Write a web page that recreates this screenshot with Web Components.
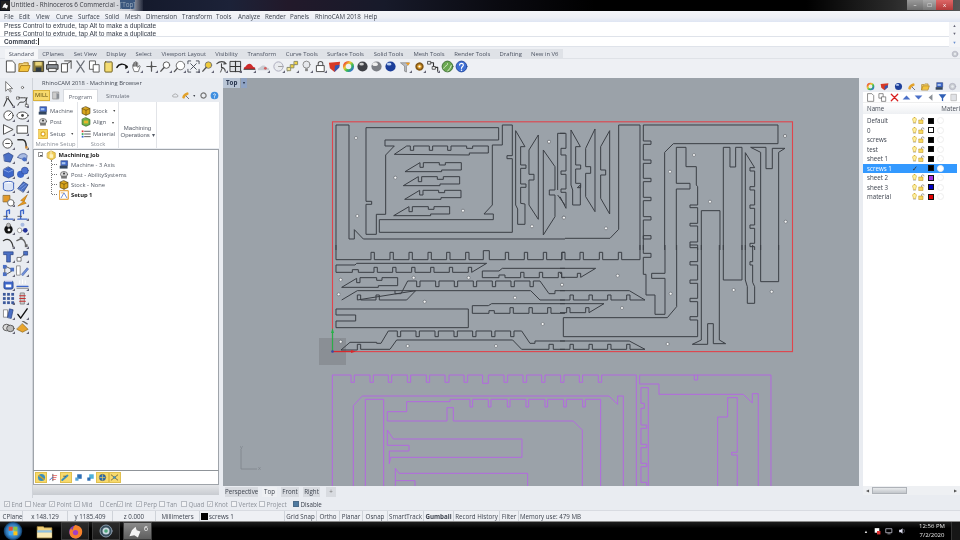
<!DOCTYPE html>
<html><head><meta charset="utf-8"><title>Rhino</title>
<style>
html,body{margin:0;padding:0;width:960px;height:540px;overflow:hidden;background:#e9ecf1}
body{font-family:"Open Sans","Noto Sans",sans-serif;font-size:6.2px;color:#3a3f48}
rh-app{filter:blur(.42px)}
</style></head><body>
<rh-app></rh-app>
<script>
const S='stroke-linejoin="round" stroke-linecap="round"';
const ICONS={
new:`<path d="M3 1h6l3 3v9H3z" fill="#fff" stroke="#444"/>`,
open:`<path d="M1 12V4h4l1-1h5v2" fill="#f5d67a" stroke="#a97c1c"/><path d="M1 12l2-6h10l-2 6z" fill="#f2c33c" stroke="#a97c1c"/>`,
save:`<rect x="1.5" y="1.5" width="11" height="11" fill="#8d7c3a" stroke="#3b3a30"/><rect x="3.5" y="2" width="7" height="4" fill="#e9d47c"/><rect x="4" y="8" width="6" height="4.5" fill="#2f3a44"/>`,
print:`<rect x="3" y="1.5" width="8" height="4" fill="#fff" stroke="#444"/><rect x="1" y="5" width="12" height="5" fill="#8a8f96" stroke="#333"/><rect x="3" y="9" width="8" height="3.5" fill="#eee" stroke="#444"/>`,
doc2:`<path d="M2 4h6v9H2z" fill="#fff" stroke="#444"/><path d="M5 1h7v8" fill="none" stroke="#444"/><path d="M8 4l4-3" stroke="#444"/>`,
cut:`<path d="M3 1l8 12M11 1L3 13" stroke="#6c7078" stroke-width="1.3"/>`,
copy:`<path d="M2 1h6v9H2z" fill="#fff" stroke="#555"/><path d="M6 5h6v8H6z" fill="#fff" stroke="#555"/>`,
paste:`<rect x="3" y="2" width="8" height="11" rx="1" fill="#f4dc72" stroke="#6a5a18"/><rect x="5" y="1" width="4" height="2" fill="#999"/>`,
undo:`<path d="M1 8c2-4 7-5 11-1" fill="none" stroke="#111" stroke-width="1.6"/><path d="M10 5l3 3-3 2z" fill="#111"/>`,
hand:`<path d="M3 8V5l1 0v2V3l1.400 0v4V2l1.500 0v5V3l1.400 0v5l1.700-2 1 .5-2 6H5z" fill="#fff" stroke="#555" stroke-width=".8"/>`,
move:`<path d="M7 2v10M2 7h10" stroke="#555" stroke-width="1.300"/><circle cx="7" cy="7" r="1.300" fill="#555"/>`,
mag:`<circle cx="8" cy="5.500" r="3.500" fill="#fff" stroke="#555"/><path d="M5.500 8L2 12" stroke="#555" stroke-width="1.500"/>`,
magd:`<circle cx="8" cy="6" r="4.500" fill="#fff" stroke="#555" stroke-dasharray="1.500 1"/><path d="M4.500 9L1.500 12.500" stroke="#555" stroke-width="1.500"/>`,
ext:`<path d="M1 4V1h3M10 1h3v3M13 10v3h-3M4 13H1v-3M4 4l6 6M10 4l-6 6" fill="none" stroke="#454b55"/>`,
magy:`<circle cx="8" cy="5.500" r="3.500" fill="#f0cb3a" stroke="#777"/><path d="M5.500 8L2 12" stroke="#555" stroke-width="1.500"/>`,
rot:`<path d="M2 4c3-3 8-3 10 0M12 4l-2.500.2M11 12c0-3-3-4-4-4V4" fill="none" stroke="#444" stroke-width="1.200"/><path d="M6 13l2-5" stroke="#444"/>`,
grid:`<rect x="1.500" y="1.500" width="11" height="11" fill="#dfe2e6" stroke="#333"/><path d="M7 1.500v11M1.500 7h11" stroke="#333" stroke-width="1.200"/>`,
car:`<path d="M1 8c2 0 3-4 6-4s3 4 6 4v2H1z" fill="#cf2a2a"/><path d="M1 10h12" stroke="#333"/>`,
carg:`<path d="M1 9c2 0 3-3 6-3s3 3 6 3v2H1z" fill="#c9ccd2"/><circle cx="9" cy="9" r="1.500" fill="#d06060"/>`,
clk:`<circle cx="7" cy="7" r="5" fill="#e9ebef" stroke="#aab"/><path d="M7 7h4" stroke="#999"/>`,
pts:`<path d="M2 12L7 7l5-4" stroke="#aaa" fill="none"/><rect x="9" y="1.500" width="3.500" height="3.500" fill="#f0d040" stroke="#886"/><rect x="5" y="5" width="3.500" height="3.500" fill="#f0d040" stroke="#886"/><rect x="1.500" y="8" width="3.500" height="3.500" fill="#f6e898" stroke="#886"/>`,
bulb:`<circle cx="7" cy="5" r="3.800" fill="#e6e8ec" stroke="#888"/><rect x="5.500" y="9" width="3" height="3" fill="#888"/>`,
lock:`<path d="M4.500 6V4a2.500 2.500 0 0 1 5 0v2" fill="none" stroke="#555" stroke-width="1.100"/><rect x="3" y="6" width="8" height="6.500" fill="#fff" stroke="#444"/>`,
shield:`<path d="M1 3l12-1-1 6-5 5-5-4z" fill="#d73a26"/><path d="M7 13l5-5 .5-3-5 1z" fill="#3257b5"/>`,
wheel:`<circle cx="7" cy="7" r="4.500" fill="none" stroke="url(#cw)" stroke-width="3"/><defs><linearGradient id="cw" x2="1" y2="1"><stop stop-color="#e33"/><stop offset=".35" stop-color="#ec3"/><stop offset=".65" stop-color="#3b5"/><stop offset="1" stop-color="#36d"/></linearGradient></defs>`,
sph1:`<circle cx="7" cy="7" r="5.500" fill="#3d3f44"/><ellipse cx="6" cy="4.500" rx="2.500" ry="1.500" fill="#ccc"/>`,
sph2:`<circle cx="7" cy="7" r="5.500" fill="#7b7e84"/><ellipse cx="5.500" cy="4.500" rx="3" ry="2" fill="#eee"/>`,
sph3:`<circle cx="7" cy="7" r="5.500" fill="#1d3f9a"/><ellipse cx="5.500" cy="4.500" rx="2.500" ry="1.500" fill="#b8d0f5"/>`,
fun:`<path d="M2 3h9L8 7v6L6 12V7z" fill="#b8bcc2" stroke="#777" stroke-width=".7"/><path d="M7 3h5l-2 3z" fill="#ee9a20"/>`,
gear:`<circle cx="7" cy="7" r="3.500" fill="#e3a22a" stroke="#84591a" stroke-width="2" stroke-dasharray="1.800 .9"/><circle cx="7" cy="7" r="1.200" fill="#fff"/>`,
node:`<path d="M2.500 3H7v5h4.500v4" fill="none" stroke="#333" stroke-width="1.200"/><rect x="1" y="1.500" width="3" height="3" fill="#eee" stroke="#333" stroke-width=".8"/><rect x="6" y="7" width="3" height="3" fill="#eee" stroke="#333" stroke-width=".8"/>`,
globe:`<circle cx="7" cy="7" r="5.800" fill="#69a84f" stroke="#3e6d35"/><path d="M3 9c2-4 4-2 4-5M7 12c2-2 3-3 4-6" stroke="#e8f0dc" fill="none"/>`,
help:`<circle cx="7" cy="7" r="5.800" fill="#3f6fd4" stroke="#254a9c"/><path d="M5 5.500C5 3 9 3 9 5.500 9 7 7 7 7 9" fill="none" stroke="#fff" stroke-width="1.300"/><circle cx="7" cy="11" r=".8" fill="#fff"/>`,
arrow:`<path d="M4 1v10l2.500-2.500L9 12l1-.8-2-3h3z" fill="#fff" stroke="#555" stroke-width=".8"/>`,
dot:`<circle cx="7" cy="7" r="1.200" fill="#fff" stroke="#555" stroke-width=".8"/>`,
pline:`<path d="M2 12L6 3l6 9" fill="none" stroke="#333" stroke-width="1.100"/><rect x="5" y="1.800" width="2" height="2" fill="#fff" stroke="#333" stroke-width=".6"/>`,
crv:`<path d="M2 11c3-8 6 2 10-8" fill="none" stroke="#333"/><rect x="1" y="2" width="2.500" height="2.500" fill="#fff" stroke="#333" stroke-width=".6"/><rect x="10.500" y="10" width="2.500" height="2.500" fill="#fff" stroke="#333" stroke-width=".6"/><path d="M3 3h8v8" stroke="#333" fill="none" stroke-dasharray="1 1"/>`,
circ:`<circle cx="7" cy="7" r="5" fill="#fff" stroke="#444"/><path d="M7 7l3-3" stroke="#444"/>`,
ell:`<ellipse cx="7" cy="7" rx="6" ry="3.800" fill="#fff" stroke="#444"/><circle cx="7" cy="7" r="1.500" fill="#444"/>`,
tri:`<path d="M2 2l10 5-10 5z" fill="#fff" stroke="#444"/>`,
rect:`<rect x="1.500" y="3" width="11" height="8" fill="#fff" stroke="#444"/>`,
circx:`<circle cx="6" cy="7" r="5" fill="#fff" stroke="#444"/><path d="M4 7h4" stroke="#444"/>`,
arc:`<path d="M2 3h5c3 0 4 3 4 8" fill="none" stroke="#333" stroke-width="1.500"/><rect x="10" y="10" width="2.500" height="2.500" fill="#d58a2c"/>`,
srf:`<path d="M2 4l5-2 5 3-3 7-6-1z" fill="#4a6fc4" stroke="#223a7a" stroke-width=".7"/>`,
srf2:`<path d="M2 7c0-4 8-6 10-2l-1 6c-3-3-6-2-9-4z" fill="#a9bbe2" stroke="#3a4f8a" stroke-width=".7"/><circle cx="9" cy="9" r="2.300" fill="#4a6fc4"/>`,
cube:`<path d="M7 1l5.500 3v6.500L7 13l-5.500-2.500V4z" fill="#3d66c9" stroke="#223a7a" stroke-width=".7"/><path d="M1.500 4L7 6.500 12.500 4" fill="none" stroke="#a9c0f0" stroke-width=".7"/>`,
spheres:`<circle cx="5" cy="9" r="3.800" fill="#3d66c9"/><circle cx="9.500" cy="5" r="3.800" fill="#4f74d2" stroke="#223a7a" stroke-width=".5"/>`,
cyl:`<ellipse cx="7" cy="3.500" rx="5.500" ry="2" fill="#fff" stroke="#3a5fb8"/><path d="M1.500 3.500v6c0 3 11 3 11 0v-6" fill="#dbe4f5" stroke="#3a5fb8"/>`,
patch:`<path d="M2 9l6-7 5 3-5 8z" fill="#4a6fc4" stroke="#223a7a" stroke-width=".7"/><path d="M4 8l5-4M6 10l5-4" stroke="#a9c0f0" stroke-width=".6"/>`,
bool:`<rect x="1.500" y="1.500" width="7" height="7" fill="#e39a2a" stroke="#7a5515" stroke-width=".7"/><circle cx="9.500" cy="9.500" r="3.500" fill="#fff" stroke="#666"/>`,
oarr:`<path d="M12 1L5 7l3 1-6 5 9-3-2-2z" fill="#e89a1c" stroke="#a7680f" stroke-width=".6"/>`,
ltool:`<path d="M2 12h10M5 12V3l3-1v4" fill="none" stroke="#3d66c9" stroke-width="1.500"/><path d="M2 9h4" stroke="#555"/>`,
blob:`<circle cx="7" cy="8" r="4.500" fill="#111"/><circle cx="7" cy="3.500" r="2.200" fill="#bbb" stroke="#555" stroke-width=".6"/><circle cx="7.500" cy="8.500" r="1.500" fill="#eee"/>`,
blob2:`<circle cx="4" cy="9" r="2.500" fill="#fff" stroke="#777" stroke-width=".7"/><circle cx="7" cy="3" r="2.200" fill="#a9bbe2"/><circle cx="10" cy="9" r="2.500" fill="#23329a"/>`,
c1:`<path d="M1.500 5c5-3 9-1 10.500 7" fill="none" stroke="#333" stroke-width="1.300"/>`,
c2:`<path d="M1 5l4-2c3 0 5 3 6 8" fill="none" stroke="#666" stroke-width="1.500"/><rect x="9.500" y="9" width="3" height="3" fill="#666"/><rect x="4" y="1" width="3" height="2" fill="#666"/>`,
tee:`<path d="M2 2h10v3H9v8H5V5H2z" fill="#4a6fc4" stroke="#223a7a" stroke-width=".7"/>`,
scale:`<rect x="1.500" y="8" width="4" height="4" fill="#fff" stroke="#555" stroke-width=".8"/><rect x="8.500" y="1.500" width="4" height="4" fill="#4a6fc4" stroke="#223a7a" stroke-width=".7"/><path d="M5 8l4-3" stroke="#555" stroke-dasharray="1 1"/>`,
nodes:`<rect x="1" y="1" width="4" height="4" fill="#4a6fc4"/><rect x="9" y="4" width="4" height="4" fill="#4a6fc4"/><rect x="1" y="9" width="4" height="4" fill="#4a6fc4"/><path d="M5 3l4 2M3 5v4M5 11l5-3" stroke="#333" stroke-width=".8"/>`,
pen:`<rect x="1" y="2" width="3.500" height="10" fill="#fff" stroke="#666" stroke-width=".7"/><path d="M6 11l6-7 1.500 1.500L7.500 12.500z" fill="#6d8fdc" stroke="#34509a" stroke-width=".6"/>`,
bbox:`<rect x="2" y="3" width="10" height="9" rx="2" fill="#3d66c9" stroke="#223a7a" stroke-width=".7"/><rect x="4" y="7" width="6" height="3" fill="#fff"/><rect x="3" y="2" width="8" height="2" fill="#dde"/>`,
dim:`<path d="M1 9h12" stroke="#3d66c9" stroke-width="1.300"/><path d="M4 6V3M7 6V2M10 6V3" stroke="#fff"/><path d="M1 11h12" stroke="#777"/>`,
arr:`<g fill="#3d5a9c"><rect x="1" y="1" width="3" height="3"/><rect x="5.500" y="1" width="3" height="3"/><rect x="10" y="1" width="3" height="3"/><rect x="1" y="5.500" width="3" height="3"/><rect x="5.500" y="5.500" width="3" height="3"/><rect x="10" y="5.500" width="3" height="3"/><rect x="1" y="10" width="3" height="3"/><rect x="5.500" y="10" width="3" height="3"/><rect x="10" y="10" width="3" height="3"/></g>`,
stripe:`<rect x="5" y="1" width="4" height="12" fill="#ccc" stroke="#666" stroke-width=".7"/><path d="M4 4h6M4 7h6M4 10h6" stroke="#c93030" stroke-width="1.200"/>`,
book:`<path d="M2 3h4v8H2z" fill="#fff" stroke="#666" stroke-width=".7"/><path d="M6 11l2-9 4 1-2 9z" fill="#4a6fc4" stroke="#223a7a" stroke-width=".7"/>`,
chk:`<path d="M2 8l3 4 7-10" fill="none" stroke="#111" stroke-width="1.500"/>`,
ring:`<ellipse cx="5" cy="7" rx="4" ry="3.500" fill="#ddd" stroke="#555"/><ellipse cx="9" cy="8" rx="4" ry="3.500" fill="#bbb" stroke="#555"/>`,
pyr:`<path d="M7 3l6 6-6 3-6-3z" fill="#e8a52e" stroke="#8a6415" stroke-width=".7"/><path d="M7 0l5 3" stroke="#666" stroke-width="1.500"/>`,
machine:`<rect x="3" y="1" width="9" height="7" fill="#3d66c9" stroke="#1b2f66" stroke-width=".7"/><rect x="1" y="8" width="11" height="4" fill="#33465f"/><rect x="4" y="3" width="5" height="3" fill="#a9c6ee"/>`,
post:`<ellipse cx="7" cy="6" rx="5" ry="4" fill="#d8d8d8" stroke="#444" stroke-width=".8"/><rect x="3" y="8" width="8" height="4" fill="#777"/><circle cx="7" cy="5" r="1.500" fill="#444"/>`,
setup:`<rect x=".7" y=".7" width="12.600" height="12.600" fill="#f6d860" stroke="#d99d1a"/><circle cx="7" cy="7" r="2.800" fill="#fff" stroke="#d99d1a" stroke-dasharray="1.200 .7" stroke-width="1.500"/>`,
stock:`<path d="M7 1l5.500 2.500v7L7 13l-5.500-2.500v-7z" fill="#d9a51e" stroke="#4d3a08" stroke-width=".9"/><path d="M1.500 3.500L7 6l5.500-2.500M7 6v7" fill="none" stroke="#4d3a08" stroke-width=".7"/>`,
align:`<path d="M7 1l5.500 2.500v7L7 13l-5.500-2.500v-7z" fill="#6fb04a" stroke="#2a5c1b" stroke-width=".9"/><rect x="4" y="5" width="6" height="4" fill="#e6b72a"/>`,
mat:`<g><rect x="1" y="2" width="2.500" height="2.500" fill="#d33"/><rect x="1" y="5.800" width="2.500" height="2.500" fill="#3a5"/><rect x="1" y="9.500" width="2.500" height="2.500" fill="#36c"/><path d="M5 3.200h8M5 7h8M5 10.700h8" stroke="#333" stroke-width="1.100"/></g>`,
job:`<path d="M2 4l5-3 6 3v7l-5 3-6-3z" fill="#f0cc55" stroke="#b98d1d" stroke-width=".8"/><path d="M7 1v6" stroke="#fff"/><path d="M5 6h5v5H5z" fill="#fff2bb"/>`,
set1:`<rect x="1" y="1" width="12" height="12" fill="#fff" stroke="#e39a2a" stroke-width="1.400"/><path d="M3 11l4-7 4 7" fill="none" stroke="#3d66c9"/><path d="M3 4h3" stroke="#e39a2a"/>`,
cloud:`<path d="M3 10a2 2 0 0 1 0-4c1-3 6-3 7 0a2 2 0 0 1 0 4z" fill="none" stroke="#777"/>`,
mach:`<rect x="1.500" y="1.500" width="9" height="11" fill="#ccc" stroke="#666" stroke-width=".7"/><path d="M7 3l4 2v6l-4 2z" fill="#8a8f96"/>`,
tool:`<path d="M2 11c0-5 4-8 9-9l1 3-5 3-2 4z" fill="#e3a22a"/><path d="M8 8l4 4" stroke="#667" stroke-width="1.400"/>`,
gr:`<circle cx="7" cy="7" r="4" fill="none" stroke="#777" stroke-width="2" stroke-dasharray="1.800 1"/>`,
helps:`<circle cx="7" cy="7" r="6" fill="#3f8fe0"/><path d="M5.500 5.500C5.500 4 8.500 4 8.500 5.500 8.500 7 7 7 7 8.500" fill="none" stroke="#fff" stroke-width="1.200"/><circle cx="7" cy="10.500" r=".8" fill="#fff"/>`,
bt1:`<circle cx="7" cy="7" r="5.500" fill="#3d8fbc"/><path d="M3 4l8 6" stroke="#d9a51e" stroke-width="2"/>`,
bt2:`<path d="M6 2v10" stroke="#111"/><path d="M6 4h6M6 7h5M6 10h4" stroke="#d33"/><path d="M1 11l4-4" stroke="#36c" stroke-width="1.500"/>`,
bt3:`<path d="M2 11l8-7" stroke="#3d8fbc" stroke-width="3"/><path d="M4 5h3" stroke="#333"/>`,
bt4:`<rect x="5" y="2" width="7" height="7" fill="#2e6fb5"/><rect x="2" y="7" width="5" height="5" fill="#59a6d8"/>`,
bt5:`<rect x="5" y="2" width="7" height="7" fill="#4fb2d8"/><rect x="2" y="7" width="5" height="5" fill="#2e6fb5"/>`,
bt6:`<circle cx="7" cy="7" r="5" fill="#2e6fb5" stroke="#444" stroke-width=".6"/><path d="M3 7h8M7 3v8" stroke="#f0cc55"/>`,
bt7:`<path d="M2 3l10 8M2 11l10-8" stroke="#333"/><circle cx="7" cy="7" r="2" fill="#3d8fbc"/>`,
pdoc:`<path d="M3 1h6l3 3v9H3z" fill="#fff" stroke="#555"/>`,
pdup:`<path d="M2 1h6v7H2z" fill="#fff" stroke="#555"/><path d="M6 6h6v7H6z" fill="#fff" stroke="#555"/>`,
pdel:`<path d="M2 2l10 10M12 2L2 12" stroke="#d81e1e" stroke-width="2"/>`,
pup:`<path d="M1 10l6-6 6 6z" fill="#4b70c8"/>`,
pdn:`<path d="M1 4l6 6 6-6z" fill="#4b70c8"/>`,
pl:`<path d="M10 2L4 7l6 5z" fill="#8a8f96"/>`,
pfil:`<path d="M1 2h12L8 8v5l-2-1V8z" fill="#2f5fb5"/>`,
pg:`<rect x="2" y="2" width="8" height="10" fill="#e0e2e6" stroke="#aaa"/>`,
gg:`<circle cx="7" cy="7" r="5" fill="#c8ccd1" stroke="#aab"/><circle cx="7" cy="7" r="2" fill="#e9ecf1"/>`,
bulbY:`<path d="M7 1a4 4 0 0 1 2.500 7v3h-5V8A4 4 0 0 1 7 1z" fill="#fff2a0" stroke="#c99a17"/><path d="M5 12.500h4" stroke="#888"/>`,
lockY:`<path d="M7 6V4a2.500 2.500 0 0 1 5 0" fill="none" stroke="#555"/><rect x="2" y="6" width="8" height="7" fill="#f6d860" stroke="#b98d1d"/>`,
ff:`<circle cx="7" cy="7.500" r="6" fill="#7a3bb8"/><path d="M7 1c5 1 7 4 6 8-1 4-7 6-10 3C1 10 1 6 3 4l1 2c1-2 1-4 3-5z" fill="#f6822a"/><circle cx="7" cy="8" r="2.500" fill="#a33fc4"/>`,
rc:`<circle cx="7" cy="7" r="6" fill="#3a5160" stroke="#89a"/><circle cx="7" cy="7" r="3.500" fill="#c8d8e0"/><circle cx="7" cy="7" r="1.800" fill="#4ca67a"/>`,
fold:`<path d="M1 12V3h5l1 1h6v8z" fill="#f1d27d" stroke="#b89545" stroke-width=".6"/><path d="M1 6h12v2H1z" fill="#8ec1e3"/><path d="M1 8h12v4H1z" fill="#f8e9b5"/>`,
rhino:`<path d="M2 11l2-5 3-3 1 3 3 1-2 5-3-2z" fill="#f5f5f5"/>`,
orb:`<circle cx="7" cy="7" r="6.500" fill="url(#ob)"/><defs><radialGradient id="ob"><stop stop-color="#7cc8ee"/><stop offset=".75" stop-color="#2c75b7"/><stop offset="1" stop-color="#0e3458"/></radialGradient></defs><rect x="4" y="4" width="2.800" height="2.800" fill="#e34d32"/><rect x="7.300" y="4" width="2.800" height="2.800" fill="#8cc63f"/><rect x="4" y="7.200" width="2.800" height="2.800" fill="#3fa9f5"/><rect x="7.300" y="7.200" width="2.800" height="2.800" fill="#fcc419"/>`,
tflag:`<path d="M3 2h8v8H3z" fill="#fff"/><rect x="7" y="7" width="6" height="6" fill="#d33"/>`,
tnet:`<rect x="2" y="3" width="10" height="7" fill="none" stroke="#dde" stroke-width="1.200"/><path d="M5 12h4" stroke="#dde"/>`,
tvol:`<path d="M2 5h3l3-3v10L5 9H2z" fill="#dde"/><path d="M10 4c2 2 2 4 0 6" stroke="#889" fill="none"/>`
};
function svgIcon(n,sz=13,fly){return `<svg width="${sz}" height="${sz}" viewBox="0 0 14 14" style="display:block;flex:none" ${S}>${ICONS[n]||''}${fly?'<path d="M14 11v3h-3z" fill="#667"/>':''}</svg>`}

class Base extends HTMLElement{constructor(){super();this.attachShadow({mode:'open'}).innerHTML=this.render()}render(){return ''}}

customElements.define('rh-icon',class extends Base{render(){const s=+this.getAttribute('size')||13;return `<style>:host{display:block;width:${s}px;height:${s}px;flex:none}</style>`+svgIcon(this.getAttribute('name'),s,this.hasAttribute('fly'))}});

customElements.define('rh-titlebar',class extends Base{render(){return `<style>
:host{display:flex;height:11px;background:linear-gradient(90deg,#10141f 0,#14192b 14%,#1c2238 24%,#22192a 30%,#171a2a 40%,#0a0a10 52%,#000 62%,#000 84%,#2a2a2a 93%,#555 100%);align-items:center;position:relative;overflow:hidden}
.ic{width:9px;height:9px;margin-left:1px;background:#222;display:flex}
.t{font-size:6.300px;color:#3a3c44;padding:0 8px 0 1px;height:11px;line-height:10px;background:linear-gradient(90deg,#dcdde0,#d6d7db 80%,#c4c7d0 90%,rgba(160,170,190,.1));white-space:nowrap}
.t b{font-weight:400;background:#3a567d;color:#9ab}
.btns{margin-left:auto;margin-right:7px;display:flex;height:9.500px;align-self:flex-start}
.btns span{display:flex;align-items:center;justify-content:center;color:#fff;font-size:6px;height:100%}
.m{width:16px;background:linear-gradient(#999,#6c6c6c)}.x{width:13px;background:linear-gradient(#aaa,#777)}.c{width:17px;background:linear-gradient(#d66,#b23a3a)}
</style><div class="ic">${svgIcon('rhino',9)}</div><div class="t">Untitled - Rhinoceros 6 Commercial - <b>[Top]</b></div>
<div class="btns"><span class="m">–</span><span class="x">□</span><span class="c">x</span></div>`}});

customElements.define('rh-menu',class extends Base{render(){const it=[['File',4],['Edit',19],['View',36],['Curve',56],['Surface',78],['Solid',105],['Mesh',125],['Dimension',146],['Transform',182],['Tools',216],['Analyze',238],['Render',265],['Panels',290],['RhinoCAM 2018',315],['Help',364]];let h='';it.forEach((a,i)=>{const w=(it[i+1]?it[i+1][1]:a[1]+30)-a[1];h+=`<span style="width:${w}px">${a[0]}</span>`});
return `<style>:host{display:flex;height:11px;padding-left:4px;box-sizing:border-box;background:linear-gradient(#f4f5f8,#eef0f5 60%,#dfe5f3);align-items:center;font-size:6.200px;color:#3a404c;white-space:nowrap}span{display:block;flex:none}</style>${h}`}});

customElements.define('rh-command',class extends Base{render(){return `<style>
:host{display:flex;flex-direction:column;height:25px;background:#fff;font-size:6.200px;color:#3a404c;position:relative}
.h{height:15px;padding:0 4px;box-sizing:border-box;border-bottom:1px solid #dfe3ea;font-family:"Liberation Sans",sans-serif;font-size:6.600px;line-height:7.900px}
.c{height:10px;padding-left:4px;line-height:9px;border-bottom:1px solid #dfe3ea;box-sizing:border-box;font-family:"Liberation Sans",sans-serif;font-size:6.400px}
b{font-weight:700}i{display:inline-block;width:.6px;height:7px;background:#333;vertical-align:-1px;margin-left:1px}
.sb{position:absolute;right:0;top:0;bottom:0;width:11px;background:#f3f4f7;display:flex;flex-direction:column;align-items:center;color:#667;font-size:4px;line-height:8px;justify-content:space-around}
</style><div class="h">Press Control to extrude, tap Alt to make a duplicate<br>Press Control to extrude, tap Alt to make a duplicate</div><div class="c"><b>Command:</b><i></i></div>
<div class="sb"><span>▲</span><span>▼</span><span style="color:#6a8fce">▼</span></div>`}});

customElements.define('rh-tabs',class extends Base{render(){const t=[['Standard',32.5,1],['CPlanes',31],['Set View',33.5],['Display',28.5],['Select',26.5],['Viewport Layout',53.5],['Visibility',32],['Transform',38.5],['Curve Tools',41.5],['Surface Tools',46],['Solid Tools',40],['Mesh Tools',41],['Render Tools',45.5],['Drafting',31.5],['New in V6',36.5]];
return `<style>:host{display:flex;height:12px;padding:2px 0 0 5px;box-sizing:border-box;font-size:5.900px;color:#4a5160;white-space:nowrap;background:#eef0f4;border-bottom:1px solid #dfe2e7;position:relative}
span{display:flex;align-items:center;justify-content:center;flex:none;background:#dfe2e7;box-sizing:border-box;height:10px}span.a{background:#f5f6f8}
.g{position:absolute;right:1px;top:3px}</style>${t.map(a=>`<span class="${a[2]?'a':''}" style="width:${a[1]}px">${a[0]}</span>`).join('')}<div class="g">${svgIcon('gg',8)}</div>`}});

customElements.define('rh-toolbar',class extends Base{render(){const n=['new','open','save','print','doc2','cut','copy','paste','undo','hand','move','mag','magd','ext','magy','rot','grid','car','carg','clk','pts','bulb','lock','shield','wheel','sph1','sph2','sph3','fun','gear','node','globe','help'];const fly=new Set(['undo','hand','move','mag','magd','ext','magy','rot','grid','car','carg','clk','pts','bulb','lock','fun','gear','node']);
return `<style>:host{display:flex;height:19px;padding:0 0 5px 3.500px;box-sizing:border-box;align-items:center;background:#eef0f4}rh-icon{margin-right:1.120px}</style>${n.map(i=>`<rh-icon name="${i}" ${fly.has(i)?'fly':''}></rh-icon>`).join('')}`}});

customElements.define('rh-left',class extends Base{render(){const n=['arrow','dot','pline','crv','circ','ell','tri','rect','circx','arc','srf','srf2','cube','spheres','cyl','patch','bool','oarr','ltool','ltool','blob','blob2','c1','c2','tee','scale','nodes','pen','bbox','dim','arr','stripe','book','chk','ring','pyr'];
return `<style>:host{display:grid;grid-template-columns:14px 14px;grid-auto-rows:14.100px;padding:3px 0 0 1px;box-sizing:border-box;background:#e9ecf1;border-right:1px solid #cfd3d9;align-content:start;justify-items:center}</style>${n.map((i,k)=>`<rh-icon name="${i}" ${k>1?'fly':''}></rh-icon>`).join('')}`}});

customElements.define('rh-ribbtn',class extends Base{render(){return `<style>:host{display:flex;align-items:center;gap:2px;height:11.500px;white-space:nowrap;color:#555b66;font-size:5.800px}i{font-style:normal;font-size:3.500px;margin-left:3px;color:#444}</style>${svgIcon(this.getAttribute('icon'),10)}<slot></slot>${this.hasAttribute('drop')?'<i>▼</i>':''}`}});

customElements.define('rh-treeitem',class extends Base{render(){return `<style>:host{display:flex;align-items:center;height:9.900px;white-space:nowrap;font-size:5.800px;color:#555b66;gap:2.500px}:host([bold]){font-weight:700;color:#222}
.c{width:5px;border-top:1px dotted #777;margin-right:-1px}</style>${this.hasAttribute('child')?'<span class="c"></span>':''}${svgIcon(this.getAttribute('icon'),10)}<slot></slot>`}});

customElements.define('rh-browser',class extends Base{render(){return `<style>
:host{display:flex;flex-direction:column;background:#e9ecf1;height:417px;box-sizing:border-box;font-size:5.800px}
.h{height:11px;padding-left:9px;line-height:11px;color:#444a55}
.tabs{display:flex;height:13px;align-items:center;position:relative;padding-left:0}
.mill{width:17px;height:11px;background:#f7d96c;border:1px solid #d9b139;box-sizing:border-box;text-align:center;line-height:9.500px;color:#5b4a10}
.t{padding:0 8px;height:13px;line-height:14px;color:#666c78}.t.a{background:#fff;width:35px;box-sizing:border-box;text-align:center;padding:0;margin-left:1px;border:1px solid #d8dbe0;border-bottom:0}
.r{margin-left:auto;display:flex;align-items:center;gap:2.500px;padding-right:1px}
.rib{height:46px;background:#fff;display:flex;border:1px solid #e4e6ea;border-width:0 1px;box-sizing:border-box;color:#555b66}
.g{display:flex;flex-direction:column;border-right:1px solid #e2e4e8;box-sizing:border-box;position:relative}
.g .cols{padding:3px 0 0 4px;flex:1}
.lab{height:9px;text-align:center;color:#8b9098;line-height:8px}
.ops{width:38px;text-align:center;line-height:7.200px;padding-top:22.500px;box-sizing:border-box;color:#555b66;font-family:"Liberation Sans",sans-serif;font-size:6px}
.tree{flex:1;background:#fff;border:1px solid #9fa4aa;border-bottom:1px solid #8f9499;margin-top:1px;margin-right:1px;box-sizing:border-box;padding:0 0 0 4px;position:relative}
.exp{width:5px;height:5px;border:1px solid #999;box-sizing:border-box;margin-right:3px;flex:none;position:relative}.exp:before{content:"";position:absolute;left:.5px;right:.5px;top:1.500px;height:1px;background:#555}
.root{display:flex;align-items:center}
.ch{margin-left:13px;border-left:1px dotted #777;padding-left:0;height:35px}
.bt{height:14px;background:#fff;border:1px solid #9fa4aa;border-top:0;margin-right:1px;box-sizing:border-box;display:flex;align-items:center;padding-left:1px}
.bt span{width:12.300px;height:11px;display:flex;align-items:center;justify-content:center;box-sizing:border-box}.bt .y{background:#f7d96c;border:1px solid #e1c04f}
.gb{height:10px;background:linear-gradient(#e3e5e8,#c8ccd1);margin-right:1px}
</style>
<div class="h">RhinoCAM 2018 - Machining Browser</div>
<div class="tabs"><div class="mill">MILL</div><div style="width:12px;display:flex;justify-content:center">${svgIcon('mach',9)}</div><div class="t a">Program</div><div class="t" style="padding-left:8px">Simulate</div>
<div class="r">${svgIcon('cloud',7)}${svgIcon('tool',9)}<span style="font-size:3.500px">▼</span>${svgIcon('gr',9)}${svgIcon('helps',9)}</div></div>
<div class="rib">
<div class="g" style="width:44px"><div class="cols"><rh-ribbtn icon="machine">Machine</rh-ribbtn><rh-ribbtn icon="post">Post</rh-ribbtn><rh-ribbtn icon="setup" drop>Setup</rh-ribbtn></div><div class="lab">Machine Setup</div></div>
<div class="g" style="width:41px"><div class="cols" style="padding-left:3px"><rh-ribbtn icon="stock" drop>Stock</rh-ribbtn><rh-ribbtn icon="align" drop>Align</rh-ribbtn><rh-ribbtn icon="mat">Material</rh-ribbtn></div><div class="lab">Stock</div></div>
<div class="g ops">Machining<br>Operations ▾</div>
</div>
<div class="tree"><div class="root"><div class="exp"></div><rh-treeitem icon="job" bold>Machining Job</rh-treeitem></div>
<div class="ch" style="height:34px"><rh-treeitem child icon="machine">Machine - 3 Axis</rh-treeitem><rh-treeitem child icon="post">Post - AbilitySystems</rh-treeitem><rh-treeitem child icon="stock">Stock - None</rh-treeitem><rh-treeitem child icon="set1" bold>Setup 1</rh-treeitem></div></div>
<div class="bt"><span class="y">${svgIcon('bt1',9)}</span><span>${svgIcon('bt2',9)}</span><span class="y">${svgIcon('bt3',9)}</span><span>${svgIcon('bt4',9)}</span><span>${svgIcon('bt5',9)}</span><span class="y">${svgIcon('bt6',9)}</span><span class="y">${svgIcon('bt7',9)}</span></div>
<div class="gb"></div>`}});

customElements.define('rh-viewport',class extends Base{render(){
const dots=(o,l)=>`<g transform="translate(${o[0]} ${o[1]}) scale(.3333)">${l.map(p=>`<circle cx="${p[0]}" cy="${p[1]}" r="4.500" fill="#f4f5f6" stroke="#4a4e54" stroke-width="1.500"/>`).join('')}</g>`;
const tile=(o,d)=>`<g transform="translate(${o[0]} ${o[1]}) scale(.3333)" fill="none" stroke-width="3"><path d="${d}"/></g>`;
const A=`M33 405V30H72V372H88V344L115 372H720
M123 38H521V75H180V93H208L182 120V298H154V358H123V268H140V259H123Z
M532 30H562V122H546V131H562V352H163V314H505V297H477L502 270V90H532Z
M208 118L245 93H256V106H266V93H313V106H323V93H368V106H378V93H425V100H443V93H490V114H433V120Z
M240 170L285 143V157H295V143H343V150H361V143H409V165H350V170Z
M235 212L280 185V200H290V185H337V193H355V185H404V207H345V212Z
M239 253L284 226V240H294V226H341V233H359V226H408V248H348V253Z
M206 302L252 275V290H262V275H310V283H327V275H374V297H317V302Z
M572 47L600 95H587V150H603V160H587V207H603V217H587V265L600 267V328H578V282L572 270Z
M640 60V313L612 270V195H627V178H612V105Z
M655 105L690 155V225H673V240H690V305L655 360Z
M720 55H698V225M698 240L720 270`;
const B=`M15 370H150L176 343V30H240V405
M0 55H18V100H3V120H18V168H3V178H18V222H3V232H18V280L0 245
M33 45L61 95H47V150H62V162H47V205H62V218H52L61 210V270H38V225L33 210Z
M105 42V290L77 245V175H92V155H77V100Z
M149 47V297L122 250V180H137V165H122V95Z
M250 405V362H273V372H250V315H273V305H250V257H273V247H250V200H273V190H250V145H273V135H250V88H273V78H250V30H654V86H340L314 112V405
M349 405V222H390V205H349V97H378V155H409V210L413 215V270H390V278H413V325H390V333H413V381H390V390H413V405
M424 405V287H480V405
M490 405V97H510V156H527V97H546V405
M556 405V113L584 158H570V168H584V215H570V225H584V270H570V280H584V330H570V340H584V385H570V395H584V405
M602 405V112L572 97H618V161H637V100H675L656 112V405`;
const C=`M33 0V44H138V22H148V44H195V22H205V44H252V22H262V44H309V22H319V44H365V22H375V44H422V22H432V44H475V17H493V44H541V22H551V44H598V22H608V44H655V22H665V44H711V22H720
M33 82V60H90L95 55H485L440 82V67H430V82H383V67H373V82H327V67H317V82H270V67H260V82H213V67H203V82H157V67H147V82H100V74H82V82Z
M50 127L95 100V113H105V98H155V106H171V98H218V122H160V127Z
M50 165L97 137H617L645 165H720M272 137L245 165H163V150H153V165H107V150H97V165Z
M210 137V146H228L248 108H275V125H285V108H332V125H342V108H388V125H398V108H445V125H455V108H502V125H512V108H558V125H568V108H615V125H625V108H645L672 146H690V137H720
M720 70H532L522 78H472V98H522V90H540V98H587V82H597V98H643V82H653V98H700V82H710V98H720
M720 176H500L490 182H442V205H492V197H508V205H555V188H565V205H612V188H622V205H668V188H678V205H720
M33 192H430V248H33V228H92V210H33Z
M48 315L75 292H155V295H168L190 258H217V275H227V258H273V275H283V258H330V275H340V258H387V275H397V258H443V275H453V258H500V275H510V258H557V275H567V258H590L615 295H630V288H720
M48 315H97V298H107V313H195L215 285H563L590 313H672V298H685V313H720`;
const D=`M240 0V44H185V22H175V44H128V22H118V44H70V22H60V44H15V22H5V44H0
M0 70H107L62 97V85H52V97H5V85H0
M0 137H208L255 165H210V150H200V165H153V150H143V165H97V150H87V165H40V150H30V165H0
M0 176H132L87 203V188H77V203H30V188H20V203H0
M0 288H208L255 313H210V298H200V313H153V298H143V313H97V298H87V313H40V298H30V313H0
M250 0V25H273V37H250V88H258V150H285V208H315V100H275V85H315V0
M350 0V185L322 218H10V275H413V225H390V215H413V170H390V160H413V115H390V105H413V60H390V50H413V8H390V0
M424 0V285L397 298H443V236H460V296H497L478 285V0
M490 0V105H546V0
M556 0V105L562 125V175H584V125L578 112V60H570V50H578V0
M602 0V110H656V0`;
const E=`M22 365V30H78V52H88V30H135V52H145V30H190V52H200V30H247V52H257V30H304V52H314V30H360V52H372V30H417V52H428V30H473V55H490V30H537V52H548V30H594V52H605V30H650V52H660V30H707V52H717V30H763V52H773V30H820V52H830V30H934V365
M85 365V122L112 93H852L878 118V93H895V365
M121 365V103H176V365
M187 168V140H245V110H375V103H435V126H443V103H490V126H498V103H547V126H555V103H603V126H611V103H660V126H668V103H716V126H724V103H773V126H781V103H827V365
M187 168H366V128H385V168H745L772 195V365
M187 195L205 222H591V277H197L193 296V258H252V241H187Z
M211 365V310L222 325H608V365M211 347H270V365
M1338 365V30H944V57H1002V88H1255L1282 114V86H1300V365
M1108 30V45H1118V30
M970 365V68H948V115H958V130H948V180H965V190H948V238H965V248H948V295H965V305H948V352H965V362
M1178 365V156H1208V98H1237V262H1220V270H1237V365`;
return `<style>:host{display:flex;flex-direction:column;height:420px}
.v{height:408px;position:relative;background:#9ba2a9;overflow:hidden}
svg{display:block}
.lbl{position:absolute;left:0;top:0;height:10px;display:flex;font-size:6.200px;font-weight:700;color:#27344d}
.lbl span{background:#b9c5d5;padding:0 3px;line-height:10px}.lbl i{background:#8fa3c4;width:6px;font-style:normal;font-size:4px;line-height:10px;text-align:center;margin-left:1px}
.tabs{display:flex;height:12px;padding:1px 0 0 2px;box-sizing:border-box;font-size:6.200px;color:#3d434e;gap:4px}
.tabs span{background:#d8dbe0;height:10px;line-height:10px;text-align:center;flex:none}.tabs span.a{background:#eef0f3}
</style><div class="v"><svg width="636" height="408" viewBox="223 78 636 408">
<rect x="319" y="338" width="27" height="27" fill="#8a8f95"/>
<g stroke="#3a3e44">${tile([325,115],A)}${tile([560,115],B)}${tile([325,245],C)}${tile([560,245],D)}</g>
<g stroke="#b368e0">${tile([325,365],E)}</g>
<rect x="332.500" y="121.800" width="460" height="229.800" fill="none" stroke="#e0444c" stroke-width="1.100"/>
${dots([325,115],[[93,69],[211,188],[97,303],[414,287],[672,81],[621,334],[716,308]])}
${dots([560,115],[[402,120],[330,170],[450,260],[677,320],[675,63],[138,340],[12,308]])}
${dots([325,245],[[47,104],[266,98],[431,98],[711,120],[41,148],[570,158],[299,170],[653,237],[47,290],[248,303],[513,303]])}
${dots([560,245],[[173,92],[6,119],[332,146],[186,189],[323,297],[521,135],[635,140]])}
<circle cx="549" cy="141.700" r="1.500" fill="#f4f5f6" stroke="#4a4e54" stroke-width=".5"/><circle cx="785" cy="136" r="1.500" fill="#f4f5f6" stroke="#4a4e54" stroke-width=".5"/>
<path d="M332.500 351V332" stroke="#27b04a" stroke-width="1.200"/><path d="M332.500 328l-1.500 5h3z" fill="#27b04a"/>
<path d="M333 351.500H353" stroke="#d8282c" stroke-width="1.200"/><path d="M356 351.500l-5-1.500v3z" fill="#d8282c"/>
<circle cx="332.500" cy="351.500" r="1.300" fill="#3846a8"/>
<path d="M241 450V469H257" fill="none" stroke="#7d838a" stroke-width=".8"/>
<text x="258" y="470" font-size="5.500" fill="#7d838a" font-family="Open Sans">x</text><text x="240" y="449" font-size="5.500" fill="#7d838a" font-family="Open Sans">y</text>
</svg><div class="lbl"><span>Top</span><i>▾</i></div></div>
<div class="tabs"><span style="width:33px">Perspective</span><span class="a" style="width:15px">Top</span><span style="width:18px">Front</span><span style="width:17px">Right</span><span style="width:10px;margin-left:2px;color:#777">+</span></div>`}});

customElements.define('rh-layer',class extends Base{render(){const c=this.getAttribute('color'),sel=this.hasAttribute('sel');return `<style>:host{display:grid;grid-template-columns:44px 7px 9px 9px 1fr;align-items:center;height:9.500px;padding-left:4px;font-size:6.200px;color:#3d434e}:host([sel]){background:#3399ff;color:#fff;margin-right:3px}
.s{width:6px;height:6px;background:${c};border:.5px solid #111;box-sizing:border-box;margin-left:1px}.o{width:7px;height:7px;border-radius:50%;border:.5px solid #eee;background:${sel?'#fff':'none'};box-sizing:border-box;margin-left:1px}
.n{white-space:nowrap}</style><span class="n"><slot></slot></span>${sel?'<span style="grid-column:2/4;padding-left:1px;color:#333;font-size:7px">✓</span>':svgIcon('bulbY',7)+svgIcon('lockY',7)}<span class="s"></span><span class="o"></span>`}});

customElements.define('rh-layers',class extends Base{render(){const r1=['wheel','shield','sph3','tool','open','machine','gg'],r2=['pdoc','pdup','pdel','pup','pdn','pl','pfil','pg'];
return `<style>:host{display:flex;flex-direction:column;height:414px;margin-top:3px;background:#fff;box-sizing:border-box;overflow:hidden;font-size:6.200px}
.a{height:11px;background:#e9ecf1;display:flex;align-items:center;padding-left:1px;flex:none}.a span{width:13.700px;display:flex;justify-content:center}
.b{height:11px;background:#fff;display:flex;align-items:center;padding-left:2px;border-bottom:1px solid #eee;box-sizing:border-box;flex:none}.b span{width:12.200px;display:flex;justify-content:center}
.hd{height:11px;display:flex;justify-content:space-between;align-items:center;padding:0 0 0 4px;background:linear-gradient(#fff,#eef0f3);color:#444a55;margin-bottom:2px;flex:none;box-sizing:border-box}
.list{flex:1}
.sb{height:9px;background:#eef0f3;display:flex;align-items:center;color:#555;font-size:3.500px;gap:3px;padding:0 3px 0 3px;flex:none}
.th{width:35px;height:7px;background:linear-gradient(#e8eaec,#c2c6cb);border:.5px solid #aeb2b8;box-sizing:border-box}
</style><div class="a">${r1.map(n=>`<span>${svgIcon(n,9)}</span>`).join('')}</div>
<div class="b">${r2.map(n=>`<span>${svgIcon(n,9)}</span>`).join('')}</div>
<div class="hd"><span>Name</span><span>Materi</span></div>
<div class="list"><rh-layer color="#000">Default</rh-layer><rh-layer color="#fff">0</rh-layer><rh-layer color="#000">screws</rh-layer><rh-layer color="#000">test</rh-layer><rh-layer color="#000">sheet 1</rh-layer><rh-layer sel color="#000">screws 1</rh-layer><rh-layer color="#a030e0">sheet 2</rh-layer><rh-layer color="#0000c0">sheet 3</rh-layer><rh-layer color="#e00000">material</rh-layer></div>
<div class="sb"><span>◀</span><div class="th"></div><span style="margin-left:auto">▶</span></div>`}});

customElements.define('rh-osnap',class extends Base{render(){const o=[['End',21,1],['Near',24,0],['Point',25,1],['Mid',26,1],['Cen',17,0],['Int',19,1],['Perp',23,1],['Tan',22,0],['Quad',26,0],['Knot',24,1],['Vertex',28,0],['Project',34,0]];
return `<style>:host{display:flex;height:12px;padding-left:4px;align-items:center;font-size:6.200px;color:#8d929a;white-space:nowrap}
span{display:flex;align-items:center;gap:2px;flex:none}i{display:block;width:5.500px;height:5.500px;border:.7px solid #b8bcc3;box-sizing:border-box;font-style:normal;font-size:5px;line-height:4px;text-align:center;color:#a8adb4;background:#f3f4f6}
.d{color:#3d434e}.d i{background:#4f7aa0;border-color:#4a6a88}</style>${o.map(a=>`<span style="width:${a[1]}px"><i>${a[2]?'✓':''}</i>${a[0]}</span>`).join('')}<span class="d"><i></i>Disable</span>`}});

customElements.define('rh-status',class extends Base{render(){const c=[[20,'CPlane'],[45,'x 148.129'],[45,'y 1185.409'],[43,'z 0.000'],[44,'Millimeters'],[85,'<u></u>screws 1',1],[32,'Grid Snap'],[23,'Ortho'],[23,'Planar'],[25,'Osnap'],[36,'SmartTrack'],[30,'<b>Gumball</b>'],[46,'Record History'],[19,'Filter'],[0,'Memory use: 479 MB',1]];
return `<style>:host{display:flex;height:11px;padding-left:3px;font-size:6.200px;color:#3d434e;white-space:nowrap;background:#eef0f4;border-top:1px solid #d8dbe1;box-sizing:border-box}
span{display:flex;align-items:center;justify-content:center;flex:none;border-right:1px solid #cfd3d9;box-sizing:border-box;gap:1px;height:100%}span.l{justify-content:flex-start;padding-left:1px}u{display:block;width:7px;height:7px;background:#000}.last{flex:1;border:0}</style>${c.map(a=>`<span class="${a[2]?'l':''} ${a[0]?'':'last'}" style="${a[0]?'width:'+a[0]+'px':''}">${a[1]}</span>`).join('')}`}});

customElements.define('rh-taskbar',class extends Base{render(){return `<style>:host{display:flex;height:19px;background:linear-gradient(#1e1e1e,#000 35%);align-items:center;color:#e8e8e8;font-size:6.200px;border-top:1px solid #8a8a8a;box-sizing:border-box}
.o{width:20px;margin:0 0 0 3px}.f{margin-left:8px;margin-right:4px;width:26px;display:flex;justify-content:center}.b{width:28px;height:18px;margin-right:3px;display:flex;justify-content:center;align-items:center;background:linear-gradient(#2b2b2b,#1a1a1a);border:.5px solid #3a3a3a;box-sizing:border-box;flex:none}
.r{background:linear-gradient(#8b8b8b,#5e5e5e);position:relative;font-size:7px;color:#fff;padding-left:0;gap:0;align-items:center}
.r span{align-self:flex-start;margin-top:1px}
.tray{margin-left:auto;display:flex;align-items:center;gap:4.500px}.clk{text-align:center;line-height:9px;width:28px;margin-left:8px;margin-right:5px;font-size:6px}.end{width:8px;height:18px;background:#161616;border-left:1px solid #333}</style>
<div class="o">${svgIcon('orb',20)}</div><div class="f">${svgIcon('fold',17)}</div><div class="b">${svgIcon('ff',15)}</div><div class="b">${svgIcon('rc',14)}</div><div class="b r" style="width:29px">${svgIcon('rhino',17)}<span>6</span></div>
<div class="tray"><span style="font-size:4px">▲</span>${svgIcon('tflag',8)}${svgIcon('tnet',8)}${svgIcon('tvol',8)}<div class="clk">12:56 PM<br>7/2/2020</div></div><div class="end"></div>`}});

customElements.define('rh-app',class extends Base{render(){return `<style>:host{display:flex;flex-direction:column;width:960px;height:540px;overflow:hidden;background:#e9ecf1}
.main{display:grid;grid-template-columns:33px 187px 639px 101px;height:420px}
rh-viewport{margin-left:3px;width:636px}rh-layers{margin-left:4px;width:97px}
</style><rh-titlebar></rh-titlebar><rh-menu></rh-menu><rh-command></rh-command><rh-tabs></rh-tabs><rh-toolbar></rh-toolbar>
<div class="main"><rh-left></rh-left><rh-browser></rh-browser><rh-viewport></rh-viewport><rh-layers></rh-layers></div>
<rh-osnap></rh-osnap><rh-status></rh-status><rh-taskbar></rh-taskbar>`}});
</script>
</body></html>
